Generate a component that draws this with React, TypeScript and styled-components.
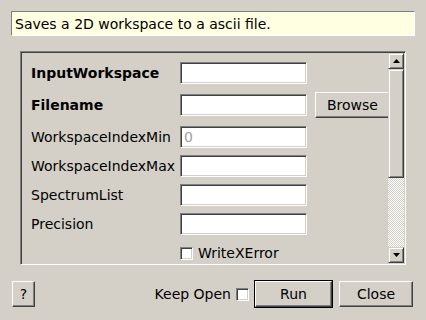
import React from 'react'
import styled, { createGlobalStyle } from 'styled-components'

const GlobalStyle = createGlobalStyle`
  html, body {
    margin: 0;
    padding: 0;
    background: #d4d0c8;
  }
  body {
    font-family: "DejaVu Sans", "Liberation Sans", sans-serif;
    font-size: 14px;
    line-height: 16px;
    color: #000;
  }
`

const Dialog = styled.div`
  width: 426px;
  height: 320px;
  box-sizing: border-box;
  padding: 11px 11px 0 11px;
  display: flex;
  flex-direction: column;
  background: #d4d0c8;
`

const Description = styled.div`
  height: 25px;
  flex: none;
  box-sizing: border-box;
  border-top: 1px solid #808080;
  border-left: 1px solid #808080;
  border-bottom: 1px solid #fff;
  border-right: 1px solid #fff;
  background: #ffffe1;
  padding-left: 3px;
  display: flex;
  align-items: center;
`

const Frame = styled.div`
  margin: 15px 9px 0 9px;
  height: 214px;
  flex: none;
  box-sizing: border-box;
  border-top: 1px solid #808080;
  border-left: 1px solid #808080;
  border-bottom: 1px solid #fff;
  border-right: 1px solid #fff;
  box-shadow: inset 1px 1px #404040, inset -1px -1px #d4d0c8;
  padding: 1px;
  display: flex;
`

const Viewport = styled.div`
  flex: 1;
  overflow: hidden;
  padding: 9px 0 0 9px;
  display: flex;
  flex-direction: column;
`

const Row = styled.div<{ $top: number }>`
  display: flex;
  align-items: center;
  margin-top: ${(p) => p.$top}px;
  white-space: nowrap;
  flex: none;
`

const Label = styled.span<{ $bold?: boolean }>`
  width: 149px;
  flex: none;
  font-weight: ${(p) => (p.$bold ? 700 : 400)};
`

const TextBox = styled.div`
  width: 127px;
  height: 22px;
  flex: none;
  box-sizing: border-box;
  background: #fff;
  border-top: 1px solid #808080;
  border-left: 1px solid #808080;
  border-bottom: 1px solid #fff;
  border-right: 1px solid #fff;
  box-shadow: inset 1px 1px #404040, inset -1px -1px #d4d0c8;
  padding-left: 3px;
  display: flex;
  align-items: center;
  color: #a0a0a0;
`

const Button = styled.div<{ $w: number; $default?: boolean }>`
  width: ${(p) => p.$w}px;
  height: 26px;
  flex: none;
  box-sizing: border-box;
  display: flex;
  align-items: center;
  justify-content: center;
  background: #d4d0c8;
  border-top: 1px solid #fff;
  border-left: 1px solid #fff;
  border-bottom: 1px solid #404040;
  border-right: 1px solid #404040;
  box-shadow: inset -1px -1px #808080;
  outline: ${(p) => (p.$default ? '1px solid #000' : 'none')};
`

const Check = styled.span`
  width: 13px;
  height: 13px;
  flex: none;
  box-sizing: border-box;
  background: #fff;
  border-top: 1px solid #808080;
  border-left: 1px solid #808080;
  border-bottom: 1px solid #fff;
  border-right: 1px solid #fff;
  box-shadow: inset 1px 1px #404040, inset -1px -1px #d4d0c8;
`

const CheckRow = styled.div`
  display: flex;
  align-items: center;
  gap: 5px;
`

const ScrollBar = styled.div`
  width: 16px;
  flex: none;
  display: flex;
  flex-direction: column;
`

const ArrowButton = styled.div`
  height: 16px;
  flex: none;
  box-sizing: border-box;
  background: #d4d0c8;
  border-top: 1px solid #d4d0c8;
  border-left: 1px solid #d4d0c8;
  border-bottom: 1px solid #404040;
  border-right: 1px solid #404040;
  box-shadow: inset 1px 1px #fff, inset -1px -1px #808080;
  display: flex;
  align-items: center;
  justify-content: center;
`

const Thumb = styled(ArrowButton)`
  height: 109px;
`

const Track = styled.div`
  flex: 1;
  background-image: repeating-conic-gradient(#fff 0 25%, #d4d0c8 0 50%);
  background-size: 2px 2px;
`

const Footer = styled.div`
  margin-top: 15px;
  height: 28px;
  display: flex;
  align-items: center;
  padding-left: 1px;
  padding-right: 2px;
`

const Spacer = styled.div`
  flex: 1;
`

const KeepOpen = styled.div`
  display: flex;
  align-items: center;
  gap: 5px;
  margin-right: 6px;
`

const Arrow = ({ down }: { down?: boolean }) => (
  <svg width="7" height="4" viewBox="0 0 7 4">
    <polygon points={down ? '0,0 7,0 3.5,4' : '0,4 7,4 3.5,0'} fill="#000" />
  </svg>
)

export default function App() {
  return (
    <Dialog>
      <GlobalStyle />
      <Description>Saves a 2D workspace to a ascii file.</Description>
      <Frame>
        <Viewport>
          <Row $top={0}>
            <Label $bold>InputWorkspace</Label>
            <TextBox />
          </Row>
          <Row $top={8}>
            <Label $bold>Filename</Label>
            <TextBox />
            <Button $w={75} style={{ marginLeft: 8 }}>Browse</Button>
          </Row>
          <Row $top={8}>
            <Label>WorkspaceIndexMin</Label>
            <TextBox>0</TextBox>
          </Row>
          <Row $top={7}>
            <Label>WorkspaceIndexMax</Label>
            <TextBox />
          </Row>
          <Row $top={7}>
            <Label>SpectrumList</Label>
            <TextBox />
          </Row>
          <Row $top={7}>
            <Label>Precision</Label>
            <TextBox />
          </Row>
          <Row $top={10}>
            <Label />
            <CheckRow>
              <Check />
              WriteXError
            </CheckRow>
          </Row>
        </Viewport>
        <ScrollBar>
          <ArrowButton><Arrow /></ArrowButton>
          <Thumb />
          <Track />
          <ArrowButton><Arrow down /></ArrowButton>
        </ScrollBar>
      </Frame>
      <Footer>
        <Button $w={23}>?</Button>
        <Spacer />
        <KeepOpen>
          Keep Open
          <Check />
        </KeepOpen>
        <Button $w={77} $default>Run</Button>
        <Button $w={74} style={{ marginLeft: 7 }}>Close</Button>
      </Footer>
    </Dialog>
  )
}
